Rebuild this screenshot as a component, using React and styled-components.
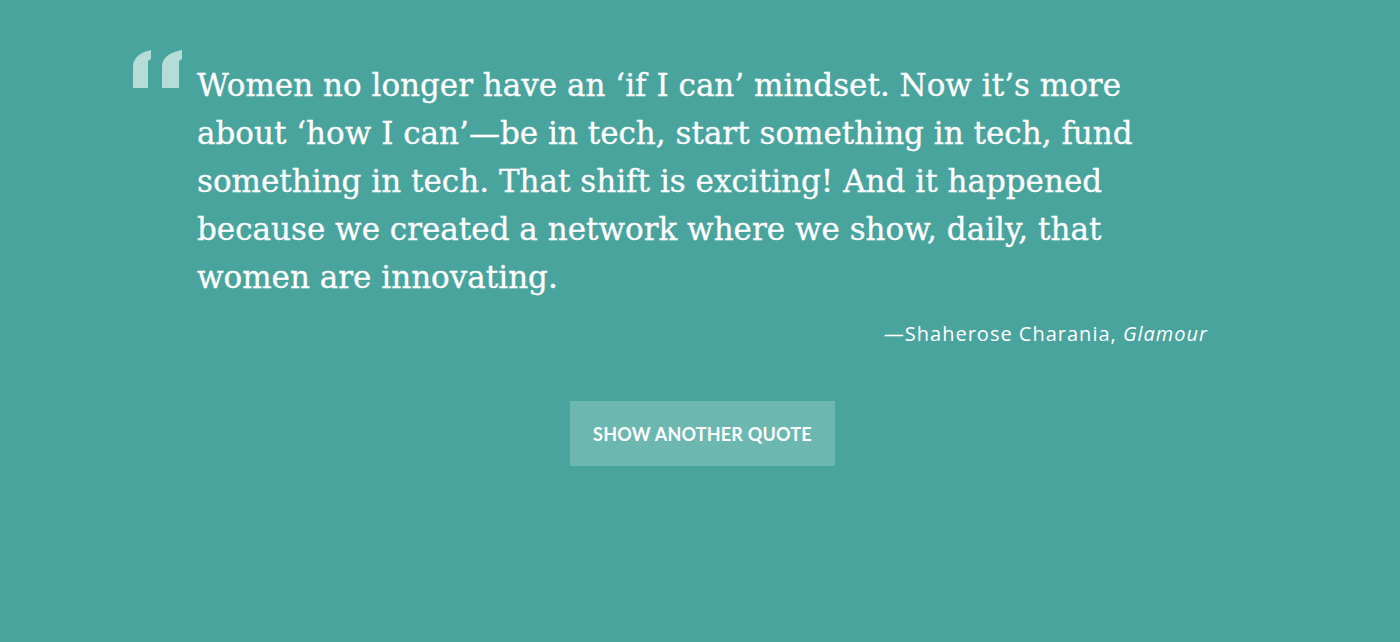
import React from "react";
import styled, { createGlobalStyle } from "styled-components";

const GlobalStyle = createGlobalStyle`
  html, body {
    margin: 0;
    padding: 0;
    background: #4aa49e;
  }
`;

const Page = styled.main`
  min-height: 642px;
  background: #4aa49e;
  padding: 50px 192px 0 133px;
  box-sizing: border-box;
  display: flex;
  align-items: flex-start;
  gap: 15px;
`;

const Mark = styled.svg`
  flex: none;
  width: 49px;
  height: 38px;
  fill: #b6dcd8;
`;

const Content = styled.div`
  flex: 1;
  display: flex;
  flex-direction: column;
`;

const Blockquote = styled.blockquote`
  margin: 11px 0 0;
  color: #ffffff;
  font-family: "DejaVu Serif", "Liberation Serif", serif;
  font-size: 31px;
  line-height: 48px;
  letter-spacing: 0;
  white-space: nowrap;
  -webkit-text-stroke: 0.3px #ffffff;
`;

const Caption = styled.p`
  margin: 21px 0 0;
  text-align: right;
  color: #ffffff;
  font-family: "Open Sans", Lato, sans-serif;
  font-size: 20px;
  line-height: 24px;
  letter-spacing: 1px;

  em {
    font-style: italic;
  }
`;

const Button = styled.button`
  align-self: center;
  margin-top: 55px;
  width: 265px;
  height: 65px;
  border: none;
  background: #6db7b1;
  color: #ffffff;
  font-family: Lato, "Open Sans", sans-serif;
  font-weight: 700;
  font-size: 18px;
  letter-spacing: 0.2px;
  text-transform: uppercase;
  cursor: pointer;
`;

const QuoteMark = () => (
  <Mark viewBox="0 0 49 38" aria-hidden="true">
    <path d="M0,38 L0,17 C0,9 5,3 18,0 L18,9 L15,11 L15,38 Z" />
    <path d="M29,38 L29,17 C29,9 34,3 49,0 L49,9 L46,11 L46,38 Z" />
  </Mark>
);

export default function App() {
  return (
    <>
      <GlobalStyle />
      <Page>
        <QuoteMark />
        <Content>
          <Blockquote>
            Women no longer have an ‘if I can’ mindset. Now it’s more
            <br />
            about ‘how I can’—be in tech, start something in tech, fund
            <br />
            something in tech. That shift is exciting! And it happened
            <br />
            because we created a network where we show, daily, that
            <br />
            women are innovating.
          </Blockquote>
          <Caption>
            —Shaherose Charania, <em>Glamour</em>
          </Caption>
          <Button type="button">Show another quote</Button>
        </Content>
      </Page>
    </>
  );
}
